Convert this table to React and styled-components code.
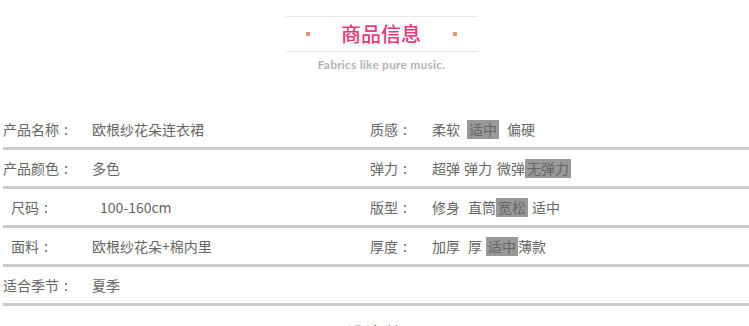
import styled, { createGlobalStyle } from "styled-components"

const Global = createGlobalStyle`
	html, body {
		margin: 0;
		padding: 0;
		background: #fff;
		overflow: hidden;
	}
	body {
		font-family: "Noto Sans CJK SC", "Noto Sans", sans-serif;
	}
`

const Page = styled.div`
	width: 757px;
	padding-left: 3px;
	padding-top: 16px;
`

const Header = styled.div`
	width: 192px;
	margin: 0 auto;
	display: flex;
	flex-direction: column;
	align-items: center;
`

const TitleBar = styled.div`
	width: 100%;
	height: 36px;
	border-top: 1px solid #e8e8e8;
	border-bottom: 1px solid #e8e8e8;
	display: flex;
	align-items: center;
	justify-content: space-between;
	padding: 0 21px 0 20px;
	box-sizing: border-box;
`

const Dot = styled.span`
	width: 4px;
	height: 4px;
	background: #f19172;
`

const Title = styled.h2`
	margin: 0;
	font-size: 20px;
	font-weight: 500;
	color: #e8387a;
	line-height: 1;
`

const Subtitle = styled.div`
	margin-top: 5px;
	font-family: "Lato", "Open Sans", sans-serif;
	font-size: 12px;
	font-weight: 700;
	color: #b4b4b4;
	letter-spacing: 0.2px;
`

const Table = styled.div`
	margin-top: 39px;
	display: flex;
	flex-direction: column;
`

const Row = styled.div`
	display: grid;
	grid-template-columns: 89px 278px 62px 1fr;
	align-items: center;
	height: 36px;
	border-bottom: 3px solid #cbcbcb;
	font-size: 14px;
	color: #666;
`

const Label = styled.span`
	padding-left: ${p => (p.$indent ? "8px" : "0")};
	white-space: nowrap;
`

const Colon = styled.span`
	display: inline-block;
	width: 14px;
	text-align: center;
`

const Value = styled.span`
	padding-left: ${p => (p.$indent ? "8px" : "0")};
	white-space: nowrap;
`

const Options = styled.div`
	display: flex;
	align-items: center;
	white-space: nowrap;
`

const Option = styled.span`
	margin-left: ${p => p.$gap}px;
	padding: ${p => (p.$on ? "0 2px" : "0")};
	height: 19px;
	line-height: 19px;
	background: ${p => (p.$on ? "#999" : "transparent")};
`

const Footer = styled.div`
	margin-top: 14px;
	text-align: center;
	padding-left: 20px;
	font-size: 17px;
	color: #222;
`

const rows = [
	{
		label: "产品名称", value: "欧根纱花朵连衣裙",
		right: "质感",
		opts: [["柔软", 0], ["适中", 7, true], ["偏硬", 8]],
	},
	{
		label: "产品颜色", value: "多色",
		right: "弹力",
		opts: [["超弹", 0], ["弹力", 4], ["微弹", 5], ["无弹力", 0, true]],
	},
	{
		label: "尺码", value: "100-160cm", indent: true,
		right: "版型",
		opts: [["修身", 0], ["直筒", 8], ["宽松", 0, true], ["适中", 4]],
	},
	{
		label: "面料", value: "欧根纱花朵+棉内里", labelIndent: true,
		right: "厚度",
		opts: [["加厚", 0], ["厚", 8], ["适中", 4, true], ["薄款", 0]],
	},
	{
		label: "适合季节", value: "夏季",
		right: "", opts: [],
	},
]

const App = () => {
	return (
		<Page>
			<Global />
			<Header>
				<TitleBar>
					<Dot />
					<Title>商品信息</Title>
					<Dot />
				</TitleBar>
				<Subtitle>Fabrics like pure music.</Subtitle>
			</Header>
			<Table>
				{rows.map(r => (
					<Row key={r.label}>
						<Label $indent={r.indent || r.labelIndent}>{r.label}<Colon>:</Colon></Label>
						<Value $indent={r.indent}>{r.value}</Value>
						<Label>{r.right && <>{r.right}<Colon>:</Colon></>}</Label>
						<Options>
							{r.opts.map(([t, gap, on]) => (
								<Option key={t + gap} $gap={gap} $on={on}>{t}</Option>
							))}
						</Options>
					</Row>
				))}
			</Table>
			<Footer>设计 效果图</Footer>
		</Page>
	)
}

export default App
